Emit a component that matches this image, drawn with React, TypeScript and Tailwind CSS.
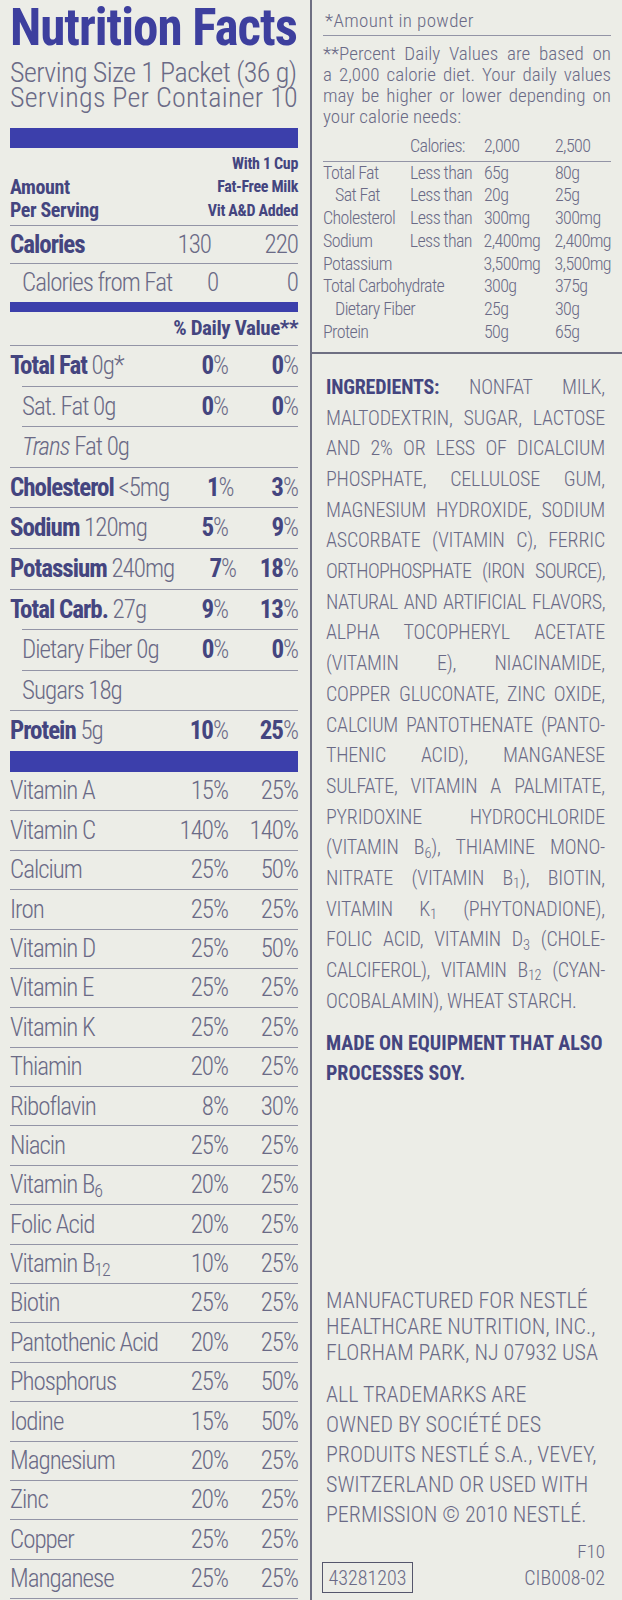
import type { ReactNode } from "react";

type Nutrient = {
  name: string;
  amount?: string;
  sub?: boolean;
  trans?: boolean;
  dv?: [string, string];
  rule: "full" | "indent" | "none";
};

const nutrients: Nutrient[] = [
  { name: "Total Fat", amount: "0g*", dv: ["0", "0"], rule: "indent" },
  { name: "Sat. Fat 0g", sub: true, dv: ["0", "0"], rule: "indent" },
  { name: " Fat 0g", sub: true, trans: true, rule: "full" },
  { name: "Cholesterol", amount: "<5mg", dv: ["1", "3"], rule: "full" },
  { name: "Sodium", amount: "120mg", dv: ["5", "9"], rule: "full" },
  { name: "Potassium", amount: "240mg", dv: ["7", "18"], rule: "full" },
  { name: "Total Carb.", amount: "27g", dv: ["9", "13"], rule: "indent" },
  { name: "Dietary Fiber 0g", sub: true, dv: ["0", "0"], rule: "indent" },
  { name: "Sugars 18g", sub: true, rule: "full" },
  { name: "Protein", amount: "5g", dv: ["10", "25"], rule: "none" },
];

// small lowered figure (B6, B12, D3...); leading-none keeps the line box unchanged
function Sub({ children }: { children: ReactNode }) {
  return <span className="relative top-[0.22em] text-[0.72em] leading-none">{children}</span>;
}

const vitamins: [ReactNode, string, string][] = [
  ["Vitamin A", "15", "25"],
  ["Vitamin C", "140", "140"],
  ["Calcium", "25", "50"],
  ["Iron", "25", "25"],
  ["Vitamin D", "25", "50"],
  ["Vitamin E", "25", "25"],
  ["Vitamin K", "25", "25"],
  ["Thiamin", "20", "25"],
  ["Riboflavin", "8", "30"],
  ["Niacin", "25", "25"],
  [<>Vitamin B<Sub>6</Sub></>, "20", "25"],
  ["Folic Acid", "20", "25"],
  [<>Vitamin B<Sub>12</Sub></>, "10", "25"],
  ["Biotin", "25", "25"],
  ["Pantothenic Acid", "20", "25"],
  ["Phosphorus", "25", "50"],
  ["Iodine", "15", "50"],
  ["Magnesium", "20", "25"],
  ["Zinc", "20", "25"],
  ["Copper", "25", "25"],
  ["Manganese", "25", "25"],
];

const dvTable: [string, string, string, string, boolean?][] = [
  ["Total Fat", "Less than", "65g", "80g"],
  ["Sat Fat", "Less than", "20g", "25g", true],
  ["Cholesterol", "Less than", "300mg", "300mg"],
  ["Sodium", "Less than", "2,400mg", "2,400mg"],
  ["Potassium", "", "3,500mg", "3,500mg"],
  ["Total Carbohydrate", "", "300g", "375g"],
  ["Dietary Fiber", "", "25g", "30g", true],
  ["Protein", "", "50g", "65g"],
];

// [line, extra tracking class for lines that run long]
const ingredients: [ReactNode, string][] = [
  [<><b className="font-bold text-[#44457f]">INGREDIENTS:</b> NONFAT MILK,</>, ""],
  ["MALTODEXTRIN, SUGAR, LACTOSE", ""],
  ["AND 2% OR LESS OF DICALCIUM", ""],
  ["PHOSPHATE, CELLULOSE GUM,", ""],
  ["MAGNESIUM HYDROXIDE, SODIUM", ""],
  ["ASCORBATE (VITAMIN C), FERRIC", ""],
  ["ORTHOPHOSPHATE (IRON SOURCE),", "tracking-[-0.035em]"],
  ["NATURAL AND ARTIFICIAL FLAVORS,", "tracking-[-0.025em]"],
  ["ALPHA TOCOPHERYL ACETATE", ""],
  ["(VITAMIN E), NIACINAMIDE,", ""],
  ["COPPER GLUCONATE, ZINC OXIDE,", ""],
  ["CALCIUM PANTOTHENATE (PANTO-", ""],
  ["THENIC ACID), MANGANESE", ""],
  ["SULFATE, VITAMIN A PALMITATE,", ""],
  ["PYRIDOXINE HYDROCHLORIDE", ""],
  [<>(VITAMIN B<Sub>6</Sub>), THIAMINE MONO-</>, ""],
  [<>NITRATE (VITAMIN B<Sub>1</Sub>), BIOTIN,</>, ""],
  [<>VITAMIN K<Sub>1</Sub> (PHYTONADIONE),</>, ""],
  [<>FOLIC ACID, VITAMIN D<Sub>3</Sub> (CHOLE-</>, ""],
  [<>CALCIFEROL), VITAMIN B<Sub>12</Sub> (CYAN-</>, "tracking-[-0.02em]"],
  ["OCOBALAMIN), WHEAT STARCH.", ""],
];

function Pct({ value }: { value: string }) {
  return (
    <span className="w-[70px] text-right">
      <b className="font-bold text-[#44457f]">{value}</b>%
    </span>
  );
}

function FactsPanel() {
  return (
    <section className="w-[310px] shrink-0 pl-[10px] pr-[12px] pt-[2px]">
      <h1 className="whitespace-nowrap text-[51px] font-bold leading-[52px] tracking-[-0.02em] text-[#3d3f9e]">
        Nutrition Facts
      </h1>
      <div className="mt-[6px] whitespace-nowrap text-[28px] leading-[25px]">
        <p className="tracking-[-0.02em]">Serving Size 1 Packet (36 g)</p>
        <p className="tracking-[0.01em]">Servings Per Container 10</p>
      </div>
      <div className="mt-[18px] h-[20px] bg-[#3c3fab]" />

      <div className="flex h-[78px] items-end justify-between border-b border-[#9394a6] pb-[3px] font-bold text-[#44457f]">
        <div className="text-[20px] leading-[23px] tracking-[-0.02em]">
          <p>Amount</p>
          <p>Per Serving</p>
        </div>
        <div className="text-right text-[16px] leading-[23.5px] tracking-[-0.02em]">
          <p>With 1 Cup</p>
          <p>Fat-Free Milk</p>
          <p>Vit A&amp;D Added</p>
        </div>
      </div>

      <div className="text-[25px] tracking-[-0.04em]">
        <div className="flex h-[38px] items-center border-b border-[#9394a6]">
          <span className="flex-1 font-bold text-[#44457f]">Calories</span>
          <span className="w-[50px] text-right">130</span>
          <span className="w-[87px] text-right">220</span>
        </div>
        <div className="flex h-[38px] items-center whitespace-nowrap pl-[12px]">
          <span className="flex-1">Calories from Fat</span>
          <span className="w-[50px] text-right">0</span>
          <span className="w-[87px] text-right">0</span>
        </div>
      </div>
      <div className="h-[10px] bg-[#3c3fab]" />
      <div className="flex h-[34px] items-center justify-end border-b border-[#9394a6] text-[21px] font-bold tracking-[-0.02em] text-[#44457f]">
        % Daily Value**
      </div>

      <div className="text-[25px] tracking-[-0.04em]">
        {nutrients.map((n) => (
          <div key={n.name}>
            <div className="flex h-[39.6px] items-center whitespace-nowrap">
              <span className={n.sub ? "flex-1 pl-[12px]" : "flex-1"}>
                {n.trans && <i className="italic">Trans</i>}
                {n.sub ? (
                  n.name
                ) : (
                  <>
                    <b className="font-bold text-[#44457f]">{n.name}</b> {n.amount}
                  </>
                )}
              </span>
              {n.dv && (
                <>
                  <Pct value={n.dv[0]} />
                  <Pct value={n.dv[1]} />
                </>
              )}
            </div>
            {n.rule === "full" && <div className="h-px bg-[#9394a6]" />}
            {n.rule === "indent" && <div className="ml-[12px] h-px bg-[#9394a6]" />}
          </div>
        ))}
      </div>

      <div className="h-[21px] bg-[#3c3fab]" />

      <div className="text-[25px] tracking-[-0.04em]">
        {vitamins.map(([name, a, b], i) => (
          <div key={i}>
            <div className="flex h-[38.4px] items-center whitespace-nowrap">
              <span className="flex-1">{name}</span>
              <span className="w-[70px] text-right">{a}%</span>
              <span className="w-[70px] text-right">{b}%</span>
            </div>
            <div className="h-px bg-[#9394a6]" />
          </div>
        ))}
      </div>
    </section>
  );
}

function NotesPanel() {
  return (
    <section className="flex w-[312px] shrink-0 flex-col border-l-2 border-[#6e6f82]">
      <div className="border-b-2 border-[#6e6f82] px-[11px] pb-[8.5px] pt-[10px]">
        <p className="pl-[2px] text-[19px] leading-[21px] tracking-[0.02em]">*Amount in powder</p>
        <div className="mt-[4px] h-px bg-[#9394a6]" />
        <div className="mt-[7px] whitespace-nowrap text-[19px] leading-[21px]">
          <p className="[text-align-last:justify]">**Percent Daily Values are based on</p>
          <p className="[text-align-last:justify]">a 2,000 calorie diet. Your daily values</p>
          <p className="[text-align-last:justify]">may be higher or lower depending on</p>
          <p>your calorie needs:</p>
        </div>

        <div className="mt-[8px] whitespace-nowrap text-[18px] leading-[22.7px] tracking-[-0.035em]">
          <div className="flex">
            <span className="w-[87px]" />
            <span className="w-[74px]">Calories:</span>
            <span className="w-[71px]">2,000</span>
            <span>2,500</span>
          </div>
          <div className="mt-[3px] h-px bg-[#9394a6]" />
          {dvTable.map(([label, limit, a, b, indent]) => (
            <div key={label} className="flex">
              <span className={indent ? "w-[87px] pl-[12px]" : "w-[87px]"}>{label}</span>
              <span className="w-[74px]">{limit}</span>
              <span className="w-[71px]">{a}</span>
              <span>{b}</span>
            </div>
          ))}
        </div>
      </div>

      <div className="flex flex-1 flex-col pl-[14px] pr-[17px] pt-[18px]">
        <div className="whitespace-nowrap text-[20px] leading-[30.7px] tracking-[-0.01em]">
          {ingredients.map(([line, track], i) => (
            <p
              key={i}
              className={(i < ingredients.length - 1 ? "[text-align-last:justify] " : "") + track}
            >
              {line}
            </p>
          ))}
        </div>
        <div className="mt-[11px] whitespace-nowrap text-[20px] font-bold leading-[30px] text-[#44457f]">
          <p>MADE ON EQUIPMENT THAT ALSO</p>
          <p>PROCESSES SOY.</p>
        </div>

        <div className="mt-auto pb-[7px]">
          <div className="whitespace-nowrap text-[22px] leading-[26px]">
            <p>MANUFACTURED FOR NESTLÉ</p>
            <p>HEALTHCARE NUTRITION, INC.,</p>
            <p>FLORHAM PARK, NJ 07932 USA</p>
          </div>
          <div className="mt-[14px] whitespace-nowrap text-[22px] leading-[30px]">
            <p>ALL TRADEMARKS ARE</p>
            <p>OWNED BY SOCIÉTÉ DES</p>
            <p>PRODUITS NESTLÉ S.A., VEVEY,</p>
            <p>SWITZERLAND OR USED WITH</p>
            <p>PERMISSION © 2010 NESTLÉ.</p>
          </div>
          <p className="mt-[12px] text-right text-[19px] leading-[20px]">F10</p>
          <div className="flex h-[31px] items-center justify-between">
            <span className="-ml-[4px] flex h-[31px] w-[91px] items-center justify-center border border-[#55566c] text-[20px]">
              43281203
            </span>
            <span className="text-[20px]">CIB008-02</span>
          </div>
        </div>
      </div>
    </section>
  );
}

export default function App() {
  return (
    <div className="flex h-[1600px] w-[622px] overflow-hidden bg-[#ecede7] font-['Roboto','Liberation_Sans',sans-serif] font-light text-[#6a6a86] [font-stretch:75%]">
      <FactsPanel />
      <NotesPanel />
    </div>
  );
}
